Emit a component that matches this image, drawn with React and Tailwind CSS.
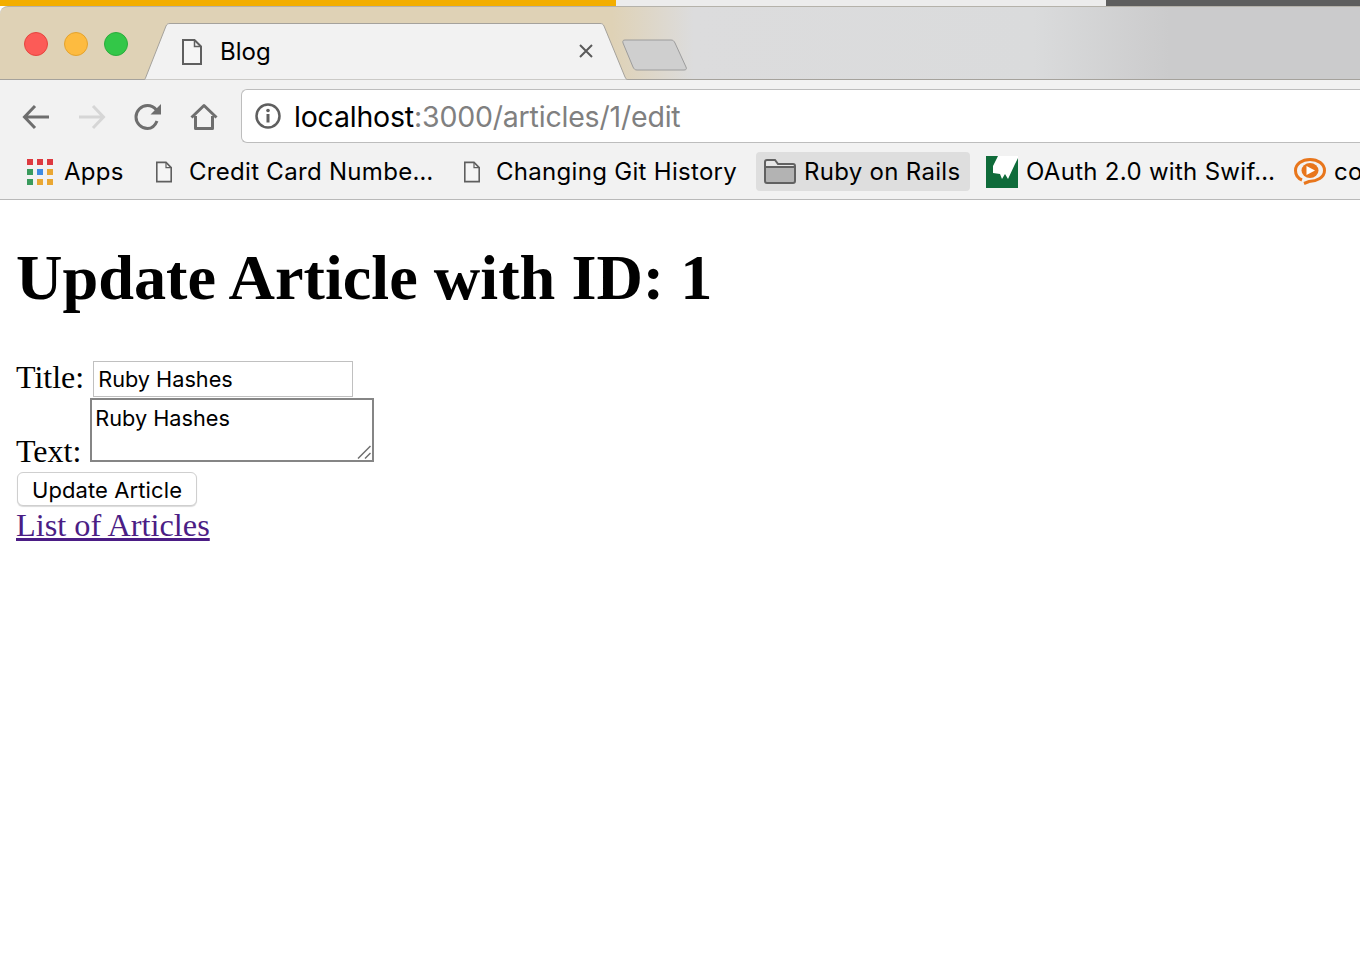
import React from 'react';

const uiFont = "font-['Inter','Liberation_Sans',sans-serif]";

function PageIcon({ className }) {
  return (
    <svg viewBox="0 0 20 26" fill="none" className={`shrink-0 ${className}`}>
      <path d="M1 1H12.5L19 7.5V25H1Z" fill="#f5f5f5" stroke="#5f5f5f" strokeWidth="2" />
      <path d="M12.5 1V7.5H19" stroke="#5f5f5f" strokeWidth="1.5" />
    </svg>
  );
}

function AppsIcon() {
  const colors = ['#de3a40', '#de3a40', '#de3a40', '#3a9b5d', '#3f8be3', '#eaa733', '#3a9b5d', '#eaa733', '#eaa733'];
  return (
    <div className="grid grid-cols-[repeat(3,6px)] gap-x-1 gap-y-1 w-[26px]">
      {colors.map((c, i) => (
        <div key={i} className="h-[6px]" style={{ backgroundColor: c }} />
      ))}
    </div>
  );
}

function Bookmark({ icon, label, className }) {
  return (
    <div className={`flex items-center shrink-0 whitespace-nowrap ${className}`}>
      {icon}
      <span>{label}</span>
    </div>
  );
}

export default function App() {
  return (
    <div className="w-full h-[966px] overflow-hidden bg-white">
      {/* strip of the window behind */}
      <div className="flex h-[6px] bg-[#f3ae00]">
        <div className="w-[616px] bg-[#f3ae00]" />
        <div className="w-[490px] bg-[#ececec]" />
        <div className="flex-1 bg-[#5e5e5e]" />
      </div>

      {/* tab strip */}
      <div className="relative h-[74px] flex rounded-tl-[8px] border-t border-t-[#b5b2aa] border-b border-b-[#a5a29c] bg-[linear-gradient(90deg,#dfd2b6_0%,#dfd2b6_45%,#dcdcdd_51%,#dadbdc_76%,#cbcbcc_86%,#cbcbcc_100%)]">
        <div className="flex items-start gap-4 pl-6 pt-[25px]">
          <div className="w-6 h-6 rounded-full bg-[#fc5b57] border border-[#e5453f]" />
          <div className="w-6 h-6 rounded-full bg-[#fdbb40] border border-[#e4a32e]" />
          <div className="w-6 h-6 rounded-full bg-[#33c748] border border-[#2bac3c]" />
        </div>
        <div className="relative ml-4 mt-[16px] w-[484px] h-[57px] shrink-0">
          <svg viewBox="0 0 484 57" className="absolute inset-0 w-full h-full">
            <path d="M0 57C0.5 57 1 56 1.5 55L22 3C23 1 24 0.5 26 0.5H456C458 0.5 459 1 460 3L481 54C482 56 483 57 484 57Z" fill="#f2f2f2" stroke="#a5a29c" />
          </svg>
          <div className={`relative flex items-center h-full pl-[38px] ${uiFont} text-[24px] text-black`}>
            <PageIcon className="w-5 h-[26px]" />
            <span className="ml-[18px]">Blog</span>
            <svg viewBox="0 0 14 14" className="absolute left-[435px] top-[21px] w-[14px] h-[14px]" fill="none" stroke="#5a5a5a" strokeWidth="2">
              <path d="M1 1L13 13M13 1L1 13" />
            </svg>
          </div>
        </div>
        <svg viewBox="0 0 66 32" className="ml-[-6px] mt-[32px] w-[66px] h-[32px] shrink-0">
          <path d="M3 1H49C51 1 52 2 53 4L64 28C65 30 64 31 62 31H15C13 31 12 30 11 28L1 4C0.5 2 1 1 3 1Z" fill="#cfcfcf" stroke="#9c9c9c" />
        </svg>
      </div>

      {/* toolbar */}
      <div className={`h-[120px] bg-[#f2f2f2] border-b border-[#b9b9b9] ${uiFont}`}>
        <div className="flex items-start h-[62px] pt-[9px]">
          <div className="flex pl-[22px] pt-[14px] items-center">
            <svg viewBox="0 0 28 26" className="w-7 h-[26px]" fill="none" stroke="#6e6e6e" strokeWidth="3">
              <path d="M27 13H3M13 2L2.5 13L13 24" />
            </svg>
            <svg viewBox="0 0 28 26" className="ml-7 w-7 h-[26px]" fill="none" stroke="#d6d6d6" strokeWidth="3">
              <path d="M1 13H25M15 2L25.5 13L15 24" />
            </svg>
            <svg viewBox="0 0 28 28" className="ml-[28px] w-7 h-7" fill="none">
              <path d="M23 18C21 23 17 25.5 13.5 25.5C7 25.5 2 20 2 14C2 8 7 2.5 13.5 2.5C17 2.5 20 4 22.5 7" stroke="#6e6e6e" strokeWidth="3" />
              <path d="M27 1V11.5H16.5Z" fill="#6e6e6e" />
            </svg>
            <svg viewBox="0 0 28 28" className="ml-7 w-7 h-7" fill="none" stroke="#6e6e6e" strokeWidth="3">
              <path d="M1.5 14.5L14 2.5L26.5 14.5M5.5 13V25.5H22.5V13" strokeLinejoin="round" />
            </svg>
          </div>
          <div className="ml-[23px] flex-1 h-[54px] flex items-center pl-[13px] bg-white border border-[#bdbdbd] border-r-0 rounded-l-[6px]">
            <svg viewBox="0 0 26 26" className="w-[26px] h-[26px] shrink-0" fill="none">
              <circle cx="13" cy="13" r="11.5" stroke="#5f5f5f" strokeWidth="2.5" />
              <circle cx="13" cy="7.5" r="1.8" fill="#5f5f5f" />
              <path d="M13 11V19.5" stroke="#5f5f5f" strokeWidth="3" />
            </svg>
            <span className="ml-[13px] pt-[3px] text-[28.5px] tracking-[-0.2px] text-black whitespace-nowrap">
              localhost<span className="text-[#808080]">:3000/articles/1/edit</span>
            </span>
          </div>
        </div>

        <div className="flex items-center h-[39px] mt-[10px] overflow-hidden text-[24px] text-black tracking-[0.3px]">
          <Bookmark className="ml-[27px] w-[96px]" icon={<div className="w-[37px] shrink-0"><AppsIcon /></div>} label="Apps" />
          <Bookmark
            className="ml-[33px] w-[275px]"
            icon={<PageIcon className="w-[16px] h-[22px] mr-[17px]" />}
            label="Credit Card Numbe…"
          />
          <Bookmark
            className="ml-[33px] w-[274px]"
            icon={<PageIcon className="w-[16px] h-[22px] mr-[16px]" />}
            label="Changing Git History"
          />
          <Bookmark
            className="ml-[18px] w-[214px] h-[39px] pl-2 rounded-[4px] bg-[#dedede]"
            icon={
              <svg viewBox="0 0 32 25" className="w-8 h-[25px] mr-2 shrink-0">
                <path d="M1 3C1 2 2 1 3 1H11L14 5H29C30 5 31 6 31 7V22C31 23 30 24 29 24H3C2 24 1 23 1 22Z" fill="#e6e6e6" />
                <path d="M1 8H31V24H1Z" fill="#b3b3b3" />
                <path d="M1 3C1 2 2 1 3 1H11L14 5H29C30 5 31 6 31 7V22C31 23 30 24 29 24H3C2 24 1 23 1 22ZM1 8H31" fill="none" stroke="#616161" strokeWidth="2" />
              </svg>
            }
            label="Ruby on Rails"
          />
          <Bookmark
            className="ml-4 w-[291px]"
            icon={
              <svg viewBox="0 0 32 32" className="w-8 h-8 mr-2 shrink-0">
                <rect width="32" height="32" fill="#0f6b3a" />
                <path d="M12 0H32V2L29 8L22 23L19 18L16 23L14 18L7 17V10Z" fill="#ffffff" />
              </svg>
            }
            label="OAuth 2.0 with Swif…"
          />
          <Bookmark
            className="ml-[17px]"
            icon={
              <svg viewBox="0 0 32 27" className="w-8 h-[27px] mr-2 shrink-0" fill="none" stroke="#e8761c">
                <path d="M8 22C3 20 1.5 16 1.5 12.5C1.5 6 8 1.5 16 1.5C24 1.5 30.5 6 30.5 12.5C30.5 19.5 23 23 15 23.5L10 25.5" strokeWidth="3" />
                <ellipse cx="16" cy="12.5" rx="8.5" ry="7.5" fill="#e8761c" stroke="none" />
                <path d="M12.5 8L21 12.5L12.5 17Z" fill="#ffffff" stroke="none" />
              </svg>
            }
            label="co"
          />
        </div>
      </div>

      {/* page */}
      <div className="pl-4 pt-[40px] font-['Liberation_Serif',serif] text-[32px] leading-[32px] text-black">
        <h1 className="text-[64.3px] leading-[76px] font-bold whitespace-nowrap">Update Article with ID: 1</h1>
        <form className="mt-[44px]">
          <div className="flex items-baseline h-[36px]">
            <label className="translate-y-px">Title:</label>
            <input
              readOnly
              value="Ruby Hashes"
              className={`ml-[9px] w-[260px] h-[36px] pl-[4px] pt-px border border-[#c0c0c0] text-[21.7px] text-black ${uiFont}`}
            />
          </div>
          <div className="flex items-end mt-px h-[65px]">
            <label className="mb-[-5px]">Text:</label>
            <div className="relative ml-[9px] w-[284px] h-[64px]">
              <textarea
                readOnly
                value="Ruby Hashes"
                className={`block w-full h-full px-[3px] py-[2px] border-2 border-[#858585] text-[21.7px] leading-[32px] text-black resize-none outline-none ${uiFont}`}
              />
              <svg viewBox="0 0 14 14" className="absolute right-[3px] bottom-[3px] w-[14px] h-[14px]" fill="none" stroke="#6f6f6f" strokeWidth="1.5">
                <path d="M1 13.5L13.5 1M8 13.5L13.5 8" />
              </svg>
            </div>
          </div>
          <button
            type="button"
            className={`block ml-px mt-[10px] w-[180px] h-[34px] pt-px bg-white border border-[#cfcfcf] rounded-[6px] shadow-[0_1px_1px_rgba(0,0,0,0.15)] text-[22px] tracking-[0.1px] text-black ${uiFont}`}
          >
            Update Article
          </button>
        </form>
        <a href="#" className="block text-[32.3px] leading-[38px] text-[#4b1d85] underline whitespace-nowrap">List of Articles</a>
      </div>
    </div>
  );
}
